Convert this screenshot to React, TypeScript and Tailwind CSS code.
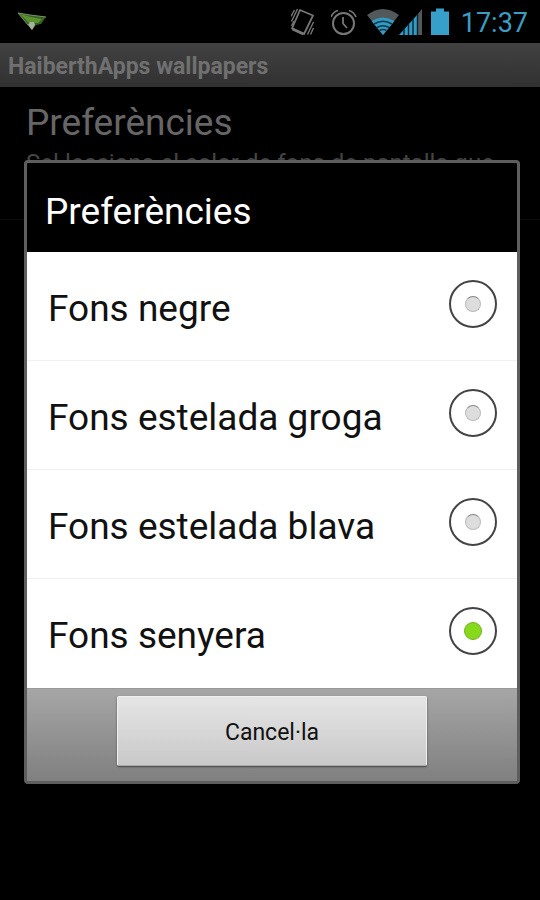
import { useState } from "react";

const options = [
  { id: "negre", label: "Fons negre" },
  { id: "groga", label: "Fons estelada groga" },
  { id: "blava", label: "Fons estelada blava" },
  { id: "senyera", label: "Fons senyera" },
];

function BirdIcon() {
  return (
    <svg className="h-5 w-7" viewBox="0 0 28 20" aria-hidden="true">
      <path d="M0 1 L12 3 L28 5 L23 12 L18 13 L14 18 L10 13 Z" fill="#35611c" />
      <path d="M2 2 L13 5 L24 7 L20 11 L11 11 Z" fill="#5a9230" />
      <path d="M0 1 L12 3 L28 5 M0 1 L10 13" fill="none" stroke="#7c9470" strokeWidth="1" />
      <path d="M10 13 L12 10 L16 10 L17 13 L14 18 Z" fill="#a8b0a0" />
    </svg>
  );
}

function VibrateIcon() {
  return (
    <svg className="h-7 w-6" viewBox="0 0 24 28" fill="none" stroke="#777" aria-hidden="true">
      <path d="M9 2 L22 7.5 L13 26 L1 20.5 Z" strokeWidth="1.8" strokeLinejoin="round" />
      <path d="M1.5 21 L12.5 26" strokeWidth="3" />
      <path
        d="M6.5 1 L0.5 13.5 M3.5 2 L0 8.5 M3 13 L0.5 18 M22.5 14 L16.500 26.500 M22.5 20 L19.5 26.500"
        strokeWidth="1.4"
      />
    </svg>
  );
}

function AlarmIcon() {
  return (
    <svg className="h-7 w-7" viewBox="0 0 28 28" fill="none" stroke="#777" aria-hidden="true">
      <circle cx="12.5" cy="15.5" r="10.5" strokeWidth="2" />
      <path d="M12 9 V15.5 L16 20" strokeWidth="1.8" />
      <path d="M0 9 C1.5 5.5 3.5 3.5 7 2.5 M25 9 C23.5 5.5 21.5 3.5 18 2.5" strokeWidth="1.8" />
    </svg>
  );
}

function WifiIcon() {
  return (
    <svg className="h-7 w-8" viewBox="0 0 32 28" aria-hidden="true">
      <path d="M0 7 Q16 -5 32 7 L16 27 Z" fill="#53585a" />
      <path d="M4.500 13 Q16 6 27.500 13 L16 27 Z" fill="#359ac2" />
      <path
        d="M7 16 Q16 10.5 25 16 M10 19.5 Q16 16 22 19.5 M12.5 22.5 Q16 20.5 19.5 22.5"
        fill="none"
        stroke="#0c394b"
        strokeWidth="1.6"
      />
    </svg>
  );
}

function SignalIcon() {
  return (
    <svg className="h-7 w-6" viewBox="0 0 24 28" aria-hidden="true">
      <path d="M0 27 L18 7 V27 Z" fill="#359ac2" />
      <path d="M18 7 L23 1 V27 H18 Z" fill="#555758" />
      <path d="M5 20 V27 M9.5 16 V27 M14 11 V27 M18.5 6 V27" stroke="#062431" strokeWidth="1.4" />
    </svg>
  );
}

function BatteryIcon() {
  return (
    <svg className="h-7 w-[18px]" viewBox="0 0 18 28" aria-hidden="true">
      <path d="M5 0.5 H13 V3.5 H18 V27 H0 V3.5 H5 Z" fill="#37a0ca" />
    </svg>
  );
}

function StatusBar() {
  return (
    <header className="flex h-[43px] items-center justify-between pr-3 pl-[18px]">
      <BirdIcon />
      <div className="flex items-center">
        <VibrateIcon />
        <span className="ml-4 flex"><AlarmIcon /></span>
        <span className="ml-2 flex"><WifiIcon /></span>
        <SignalIcon />
        <span className="ml-2 flex"><BatteryIcon /></span>
        <time className="ml-3 pt-0.5 text-[27px] leading-8 text-[#3c9cc2]">17:37</time>
      </div>
    </header>
  );
}

export default function App() {
  const [selected, setSelected] = useState("senyera");

  return (
    <div className="min-h-screen bg-black font-[Roboto,sans-serif]">
      <StatusBar />
      <h1 className="flex h-11 items-center bg-gradient-to-b from-[#414141] to-[#313131] px-2 pt-1 text-[23px] leading-7 font-bold text-[#707070]">
        HaiberthApps wallpapers
      </h1>
      <main className="border-b border-[#0c0c0c] px-[26px] pt-3 pb-10">
        <h2 className="text-[37px] leading-12 text-[#666]">Preferències</h2>
        <p className="text-[24px] leading-8 whitespace-nowrap text-[#444]">
          Sel·lecciona el color de fons de pantalla que
        </p>
      </main>

      <div className="fixed inset-x-0 top-[43px] bottom-0 flex items-center pr-5 pl-6">
        <form
          role="dialog"
          aria-labelledby="dialog-title"
          className="w-full rounded-sm border-[3px] border-[#5e5e5e] bg-black"
        >
          <h2
            id="dialog-title"
            className="flex h-[89px] items-center px-[18px] pt-2.5 text-[37px] leading-12 text-white"
          >
            Preferències
          </h2>
          <div className="divide-y divide-[#f0f0f0] bg-white">
            {options.map((option) => (
              <label
                key={option.id}
                className="flex h-[109px] items-center justify-between px-5 pb-1 text-[37px] leading-12 text-[#111]"
              >
                <span className="pt-2.5 pl-px">{option.label}</span>
                <input
                  type="radio"
                  name="fons"
                  value={option.id}
                  checked={selected === option.id}
                  onChange={() => setSelected(option.id)}
                  className="grid size-12 shrink-0 appearance-none place-items-center rounded-full border-2 border-[#444] bg-white before:size-4 before:rounded-full before:border before:border-[#bbb] before:border-t-[#888] before:bg-[#ddd] checked:before:size-[18px] checked:before:border-[#72b51c] checked:before:bg-[#87d91b]"
                />
              </label>
            ))}
          </div>
          <div className="flex h-[93px] justify-center border-t border-[#999] bg-gradient-to-b from-[#a6a6a6] to-[#808080] pt-[7px]">
            <button
              type="button"
              className="h-[70px] w-[310px] rounded-xs border border-[#f0f0f0] border-b-[#aaa] bg-gradient-to-b from-[#e5e5e5] to-[#c9c9c9] pt-1 text-[23px] leading-7 text-[#111] shadow-[0_1px_2px_#444]"
            >
              Cancel·la
            </button>
          </div>
        </form>
      </div>
    </div>
  );
}
